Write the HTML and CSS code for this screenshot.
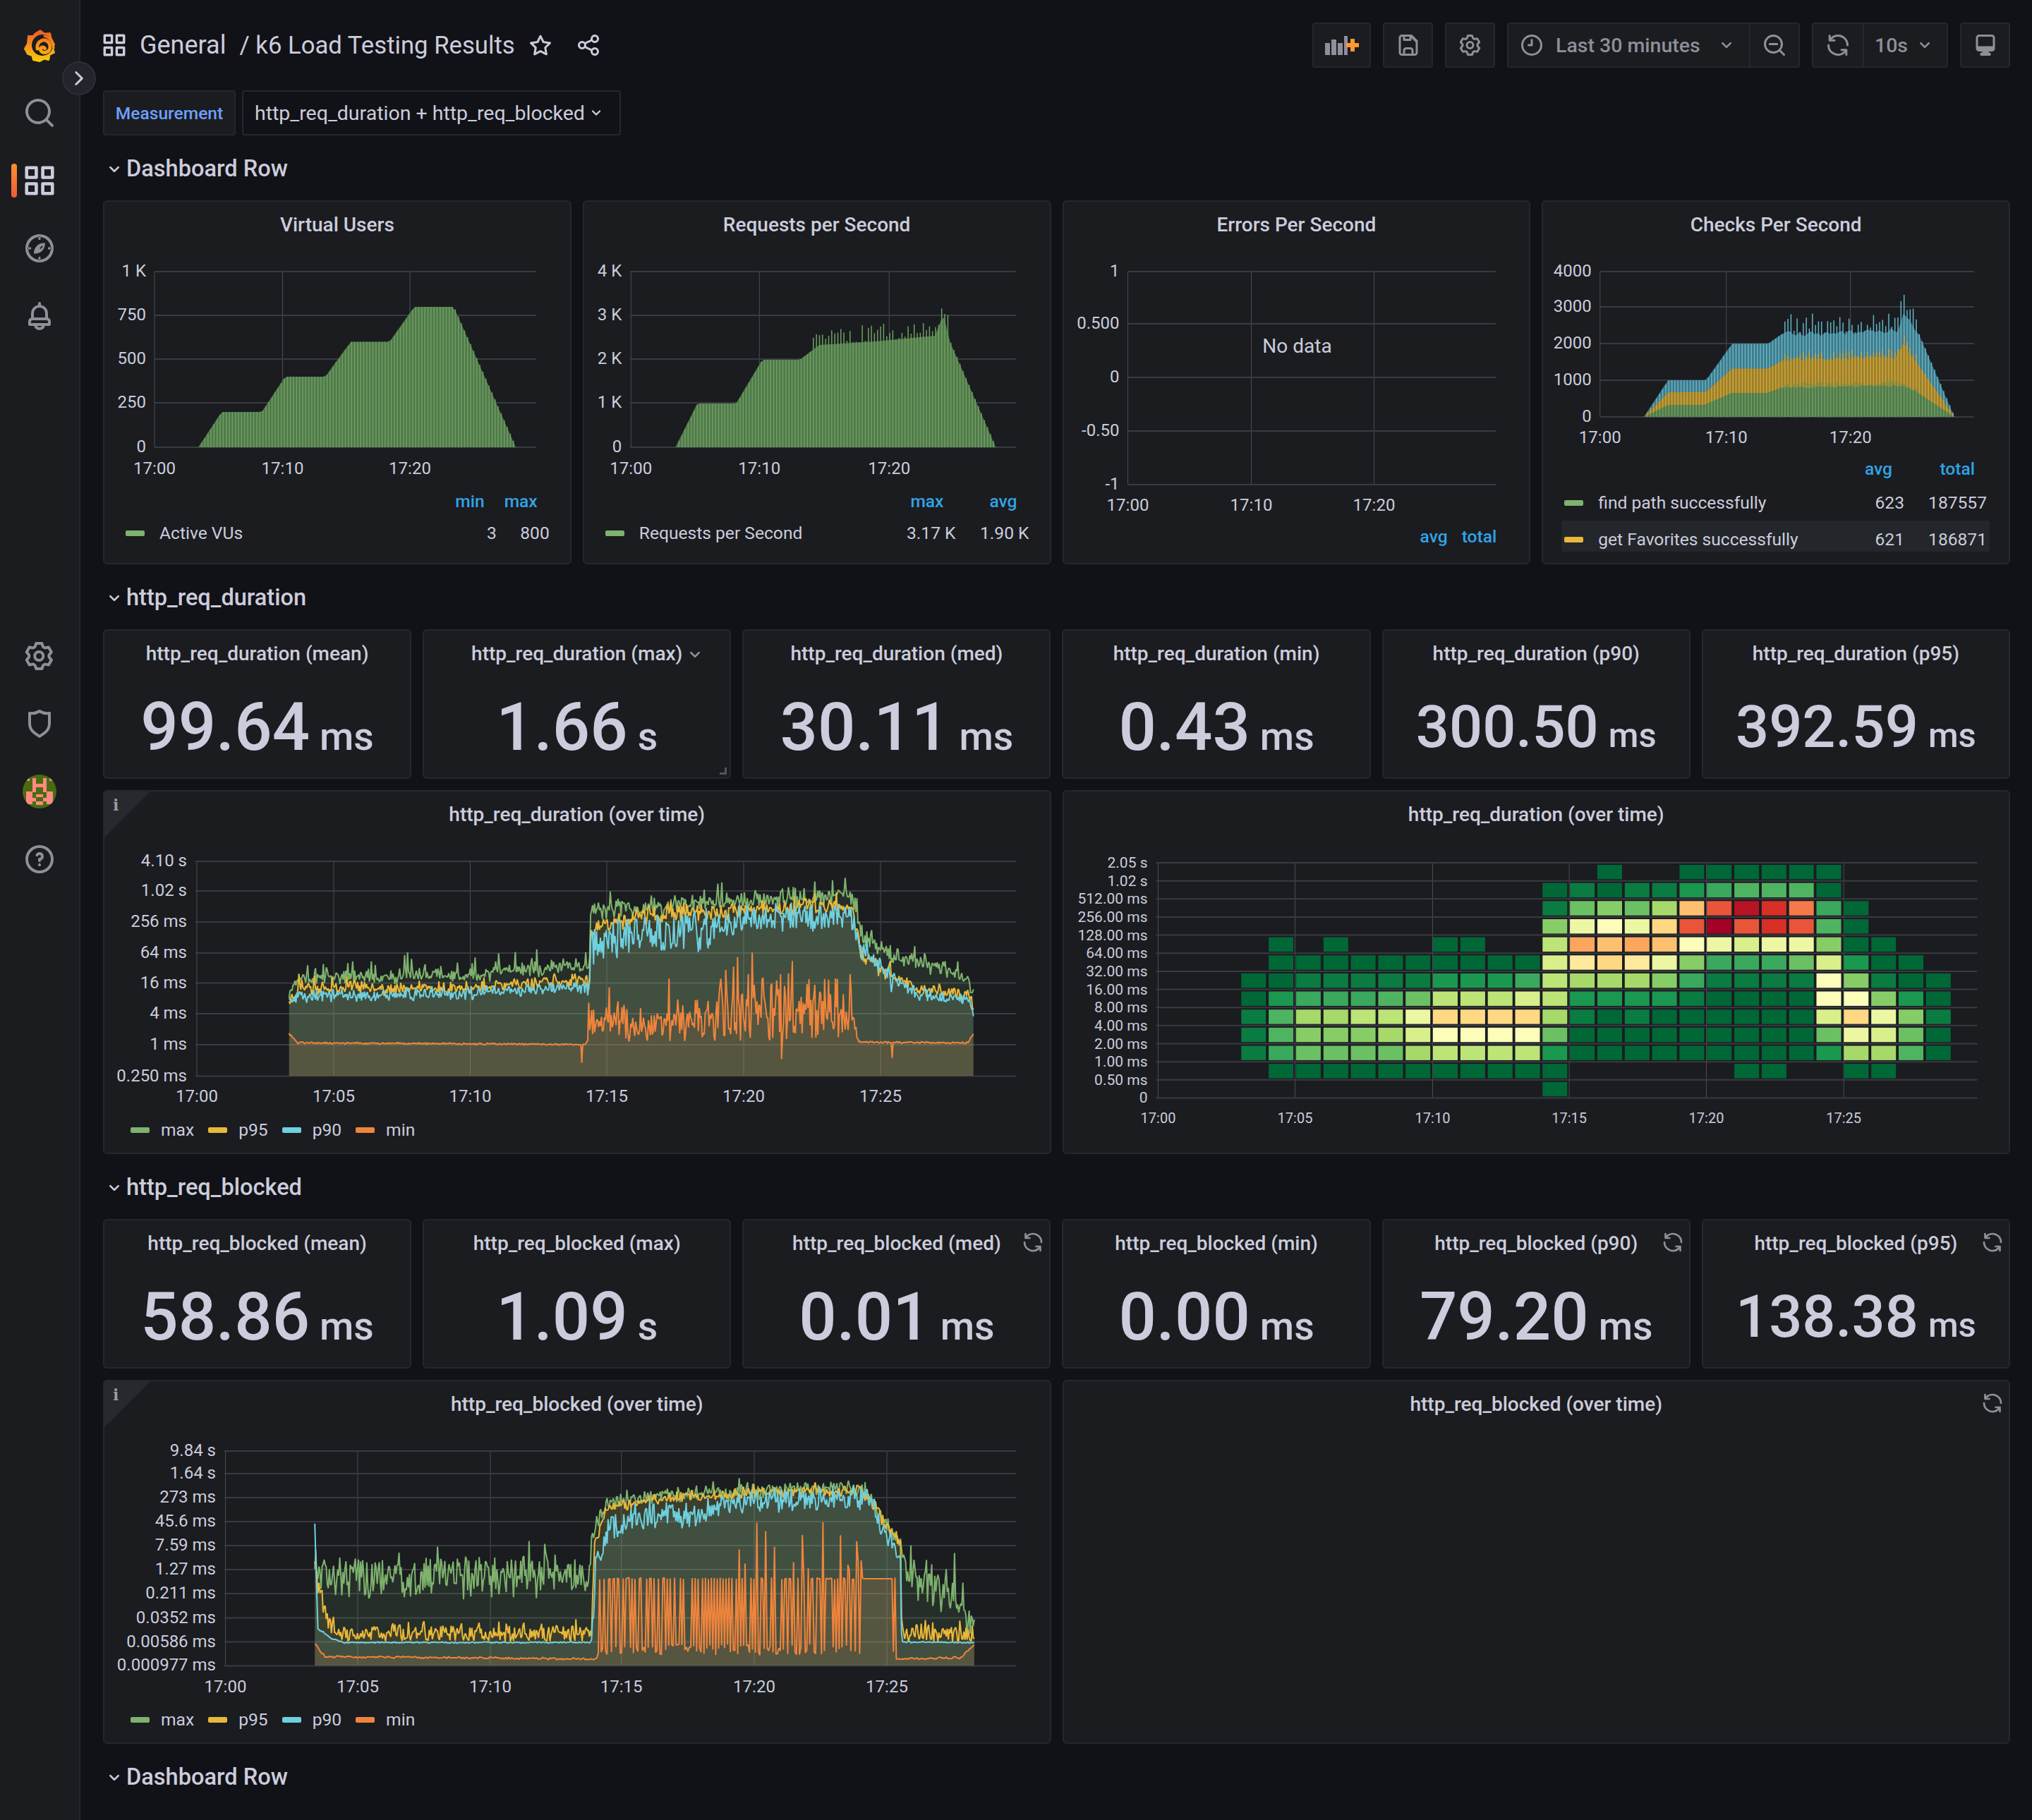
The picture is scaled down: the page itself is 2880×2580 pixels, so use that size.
FILE: index.html
```html
<!DOCTYPE html>
<html lang="en">
<head>
<meta charset="utf-8">
<title>k6 Load Testing Results</title>
<link rel="stylesheet" href="styles.css">
</head>
<body>
<svg class="sprite" aria-hidden="true">
  <symbol id="i-apps" viewBox="1.5 1.5 21 21"><path d="M4 3h6a1 1 0 0 1 1 1v6a1 1 0 0 1-1 1H4a1 1 0 0 1-1-1V4a1 1 0 0 1 1-1Zm1 2v4h4V5ZM14 3h6a1 1 0 0 1 1 1v6a1 1 0 0 1-1 1h-6a1 1 0 0 1-1-1V4a1 1 0 0 1 1-1Zm1 2v4h4V5ZM4 13h6a1 1 0 0 1 1 1v6a1 1 0 0 1-1 1H4a1 1 0 0 1-1-1v-6a1 1 0 0 1 1-1Zm1 2v4h4v-4ZM14 13h6a1 1 0 0 1 1 1v6a1 1 0 0 1-1 1h-6a1 1 0 0 1-1-1v-6a1 1 0 0 1 1-1Zm1 2v4h4v-4Z"/></symbol>
  <symbol id="i-search" viewBox="0 0 24 24"><path d="M21.71,20.29,18,16.61A9,9,0,1,0,16.61,18l3.68,3.68a1,1,0,0,0,1.42,0A1,1,0,0,0,21.71,20.29ZM11,18a7,7,0,1,1,7-7A7,7,0,0,1,11,18Z"/></symbol>
  <symbol id="i-minus" viewBox="0 0 24 24"><path d="M21.71,20.29,18,16.61A9,9,0,1,0,16.61,18l3.68,3.68a1,1,0,0,0,1.42,0A1,1,0,0,0,21.71,20.29ZM11,18a7,7,0,1,1,7-7A7,7,0,0,1,11,18ZM7.5,10h7a1,1,0,0,1,0,2h-7a1,1,0,0,1,0-2Z"/></symbol>
  <symbol id="i-compass" viewBox="0 0 24 24"><path d="M12,2A10,10,0,1,0,22,12,10,10,0,0,0,12,2Zm0,18a8,8,0,1,1,8-8A8,8,0,0,1,12,20ZM11.3,3.6h1.4V6H11.3Zm0,14.4h1.4v2.4H11.3ZM3.6,11.3H6v1.4H3.6Zm14.4,0h2.4v1.4H18ZM15.9,8.1c.3,3.4-1.9,6.6-5.1,7.4l-2.7.4c-.3-3.4,1.9-6.6,5.1-7.4Zm-2,2-1.8,1.8.6.6,1.8-1.8Z"/></symbol>
  <symbol id="i-bell" viewBox="0 0 24 24"><path d="M18,13.18V10a6,6,0,0,0-5-5.91V3a1,1,0,0,0-2,0V4.09A6,6,0,0,0,6,10v3.18A3,3,0,0,0,4,16v2a1,1,0,0,0,1,1H8.14a4,4,0,0,0,7.72,0H19a1,1,0,0,0,1-1V16A3,3,0,0,0,18,13.18ZM8,10a4,4,0,0,1,8,0v3H8Zm4,10a2,2,0,0,1-1.72-1h3.44A2,2,0,0,1,12,20Zm6-3H6V16a1,1,0,0,1,1-1H17a1,1,0,0,1,1,1Z"/></symbol>
  <symbol id="i-gear" viewBox="0 0 24 24"><path d="M19.9,12.66a1,1,0,0,1,0-1.32L21.18,9.9a1,1,0,0,0,.12-1.17l-2-3.46a1,1,0,0,0-1.07-.48l-1.88.38a1,1,0,0,1-1.15-.66l-.61-1.83A1,1,0,0,0,13.64,2h-4a1,1,0,0,0-1,.68L8.08,4.51a1,1,0,0,1-1.15.66L5,4.79A1,1,0,0,0,4,5.27L2,8.73A1,1,0,0,0,2.1,9.9l1.27,1.44a1,1,0,0,1,0,1.32L2.1,14.1A1,1,0,0,0,2,15.27l2,3.46a1,1,0,0,0,1.07.48l1.88-.38a1,1,0,0,1,1.15.66l.61,1.83a1,1,0,0,0,1,.68h4a1,1,0,0,0,.95-.68l.61-1.83a1,1,0,0,1,1.15-.66l1.88.38a1,1,0,0,0,1.07-.48l2-3.46a1,1,0,0,0-.12-1.17ZM18.41,14l.8.9-1.28,2.22-1.18-.24a3,3,0,0,0-3.45,2L12.92,20H10.36L10,18.86a3,3,0,0,0-3.45-2l-1.18.24L4.07,14.89l.8-.9a3,3,0,0,0,0-4l-.8-.9L5.35,6.89l1.18.24a3,3,0,0,0,3.45-2L10.36,4h2.56l.38,1.14a3,3,0,0,0,3.45,2l1.18-.24,1.28,2.22-.8.9A3,3,0,0,0,18.41,14ZM11.64,8a4,4,0,1,0,4,4A4,4,0,0,0,11.64,8Zm0,6a2,2,0,1,1,2-2A2,2,0,0,1,11.64,14Z"/></symbol>
  <symbol id="i-shield" viewBox="0 0 24 24"><path d="M19.63,3.65a1,1,0,0,0-.84-.2,8,8,0,0,1-6.22-1.27,1,1,0,0,0-1.14,0A8,8,0,0,1,5.21,3.45a1,1,0,0,0-.84.2A1,1,0,0,0,4,4.43v7.45a9,9,0,0,0,3.77,7.33l3.65,2.6a1,1,0,0,0,1.16,0l3.65-2.6A9,9,0,0,0,20,11.88V4.43A1,1,0,0,0,19.63,3.65ZM18,11.88a7,7,0,0,1-2.93,5.7L12,19.77,8.93,17.58A7,7,0,0,1,6,11.88V5.58a10,10,0,0,0,6-1.39,10,10,0,0,0,6,1.39Z"/></symbol>
  <symbol id="i-help" viewBox="0 0 24 24"><path d="M11.29,15.29a1.58,1.58,0,0,0-.12.15.76.76,0,0,0-.09.18.64.64,0,0,0-.06.18,1.36,1.36,0,0,0,0,.2.84.84,0,0,0,.08.38.9.9,0,0,0,.54.54.94.94,0,0,0,.76,0,.9.9,0,0,0,.54-.54A1,1,0,0,0,13,16a1,1,0,0,0-.29-.71A1,1,0,0,0,11.29,15.29ZM12,2A10,10,0,1,0,22,12,10,10,0,0,0,12,2Zm0,18a8,8,0,1,1,8-8A8,8,0,0,1,12,20ZM12,7A3,3,0,0,0,9.4,8.5a1,1,0,1,0,1.73,1A1,1,0,0,1,12,9a1,1,0,0,1,0,2,1,1,0,0,0-1,1v1a1,1,0,0,0,2,0v-.18A3,3,0,0,0,12,7Z"/></symbol>
  <symbol id="i-star" viewBox="0 0 24 24"><path d="M22,9.67A1,1,0,0,0,21.14,9l-5.69-.83L12.9,3a1,1,0,0,0-1.8,0L8.55,8.16,2.86,9a1,1,0,0,0-.81.68,1,1,0,0,0,.25,1l4.13,4-1,5.68A1,1,0,0,0,6.9,21.44L12,18.77l5.1,2.67a.93.93,0,0,0,.46.12,1,1,0,0,0,.59-.19,1,1,0,0,0,.4-1l-1-5.68,4.13-4A1,1,0,0,0,22,9.67Zm-6.15,4a1,1,0,0,0-.29.88l.72,4.2-3.76-2a1.06,1.06,0,0,0-.94,0l-3.76,2,.72-4.2a1,1,0,0,0-.29-.88l-3-3,4.21-.61a1,1,0,0,0,.76-.55L12,5.7l1.88,3.82a1,1,0,0,0,.76.55l4.21.61Z"/></symbol>
  <symbol id="i-share" viewBox="0 0 24 24"><path d="M18,14a4,4,0,0,0-3.08,1.48l-5.1-2.35a3.64,3.64,0,0,0,0-2.26l5.1-2.35A4,4,0,1,0,14,6a4.17,4.17,0,0,0,.07.71L8.79,9.14a4,4,0,1,0,0,5.72l5.28,2.43A4.17,4.17,0,0,0,14,18a4,4,0,1,0,4-4ZM18,4a2,2,0,1,1-2,2A2,2,0,0,1,18,4ZM6,14a2,2,0,1,1,2-2A2,2,0,0,1,6,14Zm12,6a2,2,0,1,1,2-2A2,2,0,0,1,18,20Z"/></symbol>
  <symbol id="i-sync" viewBox="0 0 24 24"><path d="M19.91,15.51H15.38a1,1,0,0,0,0,2h2.4A8,8,0,0,1,4,12a1,1,0,0,0-2,0,10,10,0,0,0,16.88,7.23V21a1,1,0,0,0,2,0V16.5A1,1,0,0,0,19.91,15.51ZM12,2A10,10,0,0,0,5.12,4.77V3a1,1,0,0,0-2,0V7.5a1,1,0,0,0,1,1h4.5a1,1,0,0,0,0-2H6.22A8,8,0,0,1,20,12a1,1,0,0,0,2,0A10,10,0,0,0,12,2Z"/></symbol>
  <symbol id="i-clock" viewBox="0 0 24 24"><path d="M12,2A10,10,0,1,0,22,12,10,10,0,0,0,12,2Zm0,18a8,8,0,1,1,8-8A8,8,0,0,1,12,20Zm1-13a1,1,0,0,0-2,0v4H9a1,1,0,0,0,0,2h3a1,1,0,0,0,1-1Z"/></symbol>
  <symbol id="i-save" viewBox="0 0 24 24"><path d="M20.7,7.3l-5-5A1,1,0,0,0,15,2H6A3,3,0,0,0,3,5V19a3,3,0,0,0,3,3H18a3,3,0,0,0,3-3V8A1,1,0,0,0,20.7,7.3ZM9,4h4V6H9ZM15,20H9V17a1,1,0,0,1,1-1h4a1,1,0,0,1,1,1Zm4-1a1,1,0,0,1-1,1H17V17a3,3,0,0,0-3-3H10a3,3,0,0,0-3,3v3H6a1,1,0,0,1-1-1V5A1,1,0,0,1,6,4H7V7A1,1,0,0,0,8,8h6a1,1,0,0,0,1-1V5.4l4,4Z"/></symbol>
  <symbol id="i-tv" viewBox="0 0 24 24"><path d="M6,2H18a3,3,0,0,1,3,3V15a3,3,0,0,1-3,3H15v1h1a1,1,0,0,1,1,1v1a1,1,0,0,1-1,1H8a1,1,0,0,1-1-1V20a1,1,0,0,1,1-1H9V18H6a3,3,0,0,1-3-3V5A3,3,0,0,1,6,2ZM5,13H19V5a1,1,0,0,0-1-1H6A1,1,0,0,0,5,5Z"/></symbol>
  <symbol id="i-down" viewBox="0 0 24 24"><path d="M17,9.17a1,1,0,0,0-1.41,0L12,12.71,8.46,9.17a1,1,0,0,0-1.41,0,1,1,0,0,0,0,1.42l4.24,4.24a1,1,0,0,0,1.42,0L17,10.59A1,1,0,0,0,17,9.17Z"/></symbol>
  <symbol id="i-right" viewBox="0 0 24 24"><path d="M15.54,11.29,9.88,5.64a1,1,0,0,0-1.42,0,1,1,0,0,0,0,1.41l4.95,5L8.46,17a1,1,0,0,0,0,1.41,1,1,0,0,0,.71.3,1,1,0,0,0,.71-.3l5.66-5.65A1,1,0,0,0,15.54,11.29Z"/></symbol>
</svg>

<div class="app">
  <nav class="sidemenu">
    <button class="menu-toggle"><svg class="ic ic-toggle"><use href="#i-right"/></svg></button>
    <div class="menu-item">
      <svg class="logo" viewBox="0 0 44 47">
        <defs>
          <linearGradient id="logoGrad" x1="0" y1="0" x2="0" y2="1"><stop offset="0" stop-color="#f05a28"/><stop offset="1" stop-color="#fbca0a"/></linearGradient>
          <linearGradient id="logoArm" gradientUnits="userSpaceOnUse" x1="0" y1="0" x2="0" y2="47"><stop offset="0" stop-color="#f05a28"/><stop offset="1" stop-color="#fbca0a"/></linearGradient>
        </defs>
        <path class="logo-body" d="M23 2 29 6.500 37 6 38.500 13 43 22 41 27 43 33.500 36.500 36.500 35 44 28.500 42.500 22 46 13 44 11.500 38 5 35.500 1 28 5 21 6 10 12.500 10 17 5.500Z"/>
        <circle class="logo-hole" cx="26" cy="23" r="15"/>
        <path class="logo-arm" d="M29.500 27.500C28 25 24 25.500 23.500 28.500 23 32 27.500 34.500 31.500 33 36 31.500 38 27 36.500 22 35 17 29.500 14.500 25 16.500 20.500 18.500 18 23 19 28"/>
        <path class="logo-arm logo-arm-out" d="M42 27C41 19 37 12 29 10"/>
      </svg>
    </div>
    <div class="menu-item"><svg class="ic ic-menu"><use href="#i-search"/></svg></div>
    <div class="menu-item is-active"><svg class="ic ic-menu ic-bright"><use href="#i-apps"/></svg></div>
    <div class="menu-item"><svg class="ic ic-menu"><use href="#i-compass"/></svg></div>
    <div class="menu-item"><svg class="ic ic-menu"><use href="#i-bell"/></svg></div>
    <div class="menu-spacer"></div>
    <div class="menu-item"><svg class="ic ic-menu"><use href="#i-gear"/></svg></div>
    <div class="menu-item"><svg class="ic ic-menu"><use href="#i-shield"/></svg></div>
    <div class="menu-item">
      <svg class="avatar" viewBox="0 0 48 48">
        <defs><clipPath id="avClip"><circle cx="24" cy="24" r="24"/></clipPath></defs>
        <g clip-path="url(#avClip)">
          <rect class="av-bg" width="48" height="48"/>
          <path class="av-fg" d="M14 5h5v8h10V5h5v20H29V18H19v7H14ZM5 5h5v4H5ZM38 5h5v4h-5ZM5 24h9v18H5ZM34 24h9v18H34ZM19 28h10v4H19ZM14 33h5v5H14ZM29 33h5v5H29ZM19 38h10v5H19Z"/>
        </g>
      </svg>
    </div>
    <div class="menu-item"><svg class="ic ic-menu"><use href="#i-help"/></svg></div>
  </nav>

  <main class="main">
    <header class="navbar">
      <svg class="ic ic-head ic-bright"><use href="#i-apps"/></svg>
      <h1 class="crumbs"><span>General</span><span class="crumb-sep">/ k6 Load Testing Results</span></h1>
      <svg class="ic ic-nav ic-bright"><use href="#i-star"/></svg>
      <svg class="ic ic-nav ic-bright"><use href="#i-share"/></svg>
      <div class="toolbar">
        <div class="tbtn tbtn-add">
          <svg class="add-ic" viewBox="0 0 48 27">
            <path class="add-bars" d="M0 10h7v17H0ZM9 5h7v22H9ZM18 10h7v17h-7ZM27 0h5v27h-5Z"/>
            <path class="add-plus" d="M36 4h6v6h6v6h-6v6h-6v-6h-6v-6h6Z"/>
          </svg>
        </div>
        <div class="tbtn tbtn-sq"><svg class="ic ic-tool"><use href="#i-save"/></svg></div>
        <div class="tbtn tbtn-sq"><svg class="ic ic-tool"><use href="#i-gear"/></svg></div>
        <div class="tgroup">
          <div class="tpart tpart-range"><svg class="ic ic-tool"><use href="#i-clock"/></svg><span class="ttext">Last 30 minutes</span><svg class="ic ic-chev"><use href="#i-down"/></svg></div>
          <div class="tpart tpart-sq"><svg class="ic ic-tool"><use href="#i-minus"/></svg></div>
        </div>
        <div class="tgroup">
          <div class="tpart tpart-sq"><svg class="ic ic-tool"><use href="#i-sync"/></svg></div>
          <div class="tpart tpart-int"><span class="ttext">10s</span><svg class="ic ic-chev"><use href="#i-down"/></svg></div>
        </div>
        <div class="tbtn tbtn-sq"><svg class="ic ic-tool"><use href="#i-tv"/></svg></div>
      </div>
    </header>

    <div class="vars">
      <label class="var-label">Measurement</label>
      <div class="var-value">http_req_duration + http_req_blocked<svg class="ic ic-chev ic-chev-sm"><use href="#i-down"/></svg></div>
    </div>

    <div class="row-head"><svg class="ic ic-row"><use href="#i-down"/></svg>Dashboard Row</div>
    <section class="grid grid-4 h-graph">
      <article class="panel">
        <h2 class="panel-title">Virtual Users</h2>
        <svg class="chart" data-chart="vu"></svg>
        <table class="legend">
          <tr><th></th><th class="w75">min</th><th class="w75">max</th></tr>
          <tr><td class="name"><i class="sw sw-green"></i>Active VUs</td><td>3</td><td>800</td></tr>
        </table>
      </article>
      <article class="panel">
        <h2 class="panel-title">Requests per Second</h2>
        <svg class="chart" data-chart="rps"></svg>
        <table class="legend">
          <tr><th></th><th class="w104">max</th><th class="w104">avg</th></tr>
          <tr><td class="name"><i class="sw sw-green"></i>Requests per Second</td><td>3.17 K</td><td>1.90 K</td></tr>
        </table>
      </article>
      <article class="panel">
        <h2 class="panel-title">Errors Per Second</h2>
        <svg class="chart" data-chart="err"></svg>
        <div class="legend-head-only"><span>avg</span><span>total</span></div>
      </article>
      <article class="panel">
        <h2 class="panel-title">Checks Per Second</h2>
        <svg class="chart" data-chart="checks"></svg>
        <table class="legend legend-tall">
          <tr><th></th><th class="w117">avg</th><th class="w117">total</th></tr>
          <tr><td class="name"><i class="sw sw-green"></i>find path successfully</td><td>623</td><td>187557</td></tr>
          <tr class="hl"><td class="name"><i class="sw sw-yellow"></i>get Favorites successfully</td><td>621</td><td>186871</td></tr>
        </table>
      </article>
    </section>

    <div class="row-head"><svg class="ic ic-row"><use href="#i-down"/></svg>http_req_duration</div>
    <section class="grid grid-6 h-stat">
      <article class="panel"><h2 class="panel-title">http_req_duration (mean)</h2><div class="stat"><span class="num">99.64</span><span class="unit">ms</span></div></article>
      <article class="panel"><h2 class="panel-title">http_req_duration (max)<svg class="ic ic-chev ic-chev-title"><use href="#i-down"/></svg></h2><div class="stat"><span class="num">1.66</span><span class="unit">s</span></div><span class="resize"></span></article>
      <article class="panel"><h2 class="panel-title">http_req_duration (med)</h2><div class="stat"><span class="num">30.11</span><span class="unit">ms</span></div></article>
      <article class="panel"><h2 class="panel-title">http_req_duration (min)</h2><div class="stat"><span class="num">0.43</span><span class="unit">ms</span></div></article>
      <article class="panel"><h2 class="panel-title">http_req_duration (p90)</h2><div class="stat stat-sm"><span class="num">300.50</span><span class="unit">ms</span></div></article>
      <article class="panel"><h2 class="panel-title">http_req_duration (p95)</h2><div class="stat stat-sm"><span class="num">392.59</span><span class="unit">ms</span></div></article>
    </section>
    <section class="grid grid-2 h-graph gap-top">
      <article class="panel">
        <span class="info-corner"><em>i</em></span>
        <h2 class="panel-title">http_req_duration (over time)</h2>
        <svg class="chart" data-chart="duration"></svg>
        <ul class="legend-line">
          <li><i class="sw sw-green"></i>max</li><li><i class="sw sw-yellow"></i>p95</li><li><i class="sw sw-blue"></i>p90</li><li><i class="sw sw-orange"></i>min</li>
        </ul>
      </article>
      <article class="panel">
        <h2 class="panel-title">http_req_duration (over time)</h2>
        <svg class="chart" data-chart="heat"></svg>
      </article>
    </section>

    <div class="row-head"><svg class="ic ic-row"><use href="#i-down"/></svg>http_req_blocked</div>
    <section class="grid grid-6 h-stat">
      <article class="panel"><h2 class="panel-title">http_req_blocked (mean)</h2><div class="stat"><span class="num">58.86</span><span class="unit">ms</span></div></article>
      <article class="panel"><h2 class="panel-title">http_req_blocked (max)</h2><div class="stat"><span class="num">1.09</span><span class="unit">s</span></div></article>
      <article class="panel"><svg class="ic ic-refresh"><use href="#i-sync"/></svg><h2 class="panel-title">http_req_blocked (med)</h2><div class="stat"><span class="num">0.01</span><span class="unit">ms</span></div></article>
      <article class="panel"><h2 class="panel-title">http_req_blocked (min)</h2><div class="stat"><span class="num">0.00</span><span class="unit">ms</span></div></article>
      <article class="panel"><svg class="ic ic-refresh"><use href="#i-sync"/></svg><h2 class="panel-title">http_req_blocked (p90)</h2><div class="stat"><span class="num">79.20</span><span class="unit">ms</span></div></article>
      <article class="panel"><svg class="ic ic-refresh"><use href="#i-sync"/></svg><h2 class="panel-title">http_req_blocked (p95)</h2><div class="stat stat-sm"><span class="num">138.38</span><span class="unit">ms</span></div></article>
    </section>
    <section class="grid grid-2 h-graph gap-top">
      <article class="panel">
        <span class="info-corner"><em>i</em></span>
        <h2 class="panel-title">http_req_blocked (over time)</h2>
        <svg class="chart" data-chart="blocked"></svg>
        <ul class="legend-line">
          <li><i class="sw sw-green"></i>max</li><li><i class="sw sw-yellow"></i>p95</li><li><i class="sw sw-blue"></i>p90</li><li><i class="sw sw-orange"></i>min</li>
        </ul>
      </article>
      <article class="panel">
        <svg class="ic ic-refresh"><use href="#i-sync"/></svg>
        <h2 class="panel-title">http_req_blocked (over time)</h2>
      </article>
    </section>

    <div class="row-head"><svg class="ic ic-row"><use href="#i-down"/></svg>Dashboard Row</div>
  </main>
</div>
<script src="charts.js"></script>
</body>
</html>
```
FILE: styles.css
```css
* { box-sizing: border-box; }
html, body { margin: 0; height: 100%; background: #111217; }
body { font-family: Roboto, "Liberation Sans", sans-serif; color: #ccccdc; overflow: hidden; }
.sprite { position: absolute; width: 0; height: 0; }
.app { display: flex; height: 2580px; }
.ic { fill: currentColor; display: block; flex: none; }
.ic-bright { color: #ccccdc; }

/* side menu */
.sidemenu { position: relative; width: 114px; flex: none; background: #1a1c20; border-right: 2px solid #25272c; padding-top: 16px; display: flex; flex-direction: column; color: #8e8f98; }
.menu-item { position: relative; height: 96px; display: flex; align-items: center; justify-content: center; }
.menu-item.is-active::before { content: ""; position: absolute; left: 16px; top: 24px; width: 8px; height: 48px; border-radius: 4px; background: linear-gradient(#ff9030, #f05a38); }
.menu-item.is-active .ic-menu { color: #ccccdc; }
.menu-spacer { height: 386px; }
.ic-menu { width: 48px; height: 48px; }
.logo { width: 44px; height: 47px; }
.logo-body { fill: url(#logoGrad); stroke: url(#logoGrad); stroke-width: 2; stroke-linejoin: round; }
.logo-hole { fill: #1a1c20; }
.logo-arm { fill: none; stroke: url(#logoArm); stroke-width: 5; stroke-linecap: round; }
.logo-arm-out { stroke-width: 3; }
.avatar { width: 48px; height: 48px; }
.av-bg { fill: #4a6a10; }
.av-fg { fill: #ff8a80; }
.menu-toggle { position: absolute; z-index: 2; left: 88px; top: 87px; width: 48px; height: 48px; padding: 0; border-radius: 50%; border: 2px solid #2c2f35; background: #22252b; color: #ccccdc; display: flex; align-items: center; justify-content: center; }
.ic-toggle { width: 36px; height: 36px; }

/* main */
.main { flex: 1; min-width: 0; padding: 32px 31px 0 30px; }
.navbar { height: 64px; display: flex; align-items: center; }
.ic-head { width: 36px; height: 36px; margin: 0 18px 0 0; }
.crumbs { margin: 0; font-size: 36px; font-weight: 400; white-space: nowrap; display: flex; width: 550px; }
.crumb-sep { margin-left: 19px; font-size: 34.7px; line-height: 42px; }
.ic-nav { width: 36px; height: 36px; margin-right: 32px; }
.toolbar { margin-left: auto; display: flex; gap: 17px; color: #8e8f98; }
.tbtn, .tgroup { height: 64px; background: #1a1c20; border: 2px solid #25272c; border-radius: 4px; display: flex; align-items: center; justify-content: center; }
.tbtn-add { width: 83px; }
.add-ic { width: 48px; height: 27px; }
.add-bars { fill: #8e8f98; }
.add-plus { fill: #ff9830; }
.tbtn-sq { width: 71px; }
.ic-tool { width: 36px; height: 36px; }
.tgroup { justify-content: flex-start; }
.tpart { height: 100%; display: flex; align-items: center; justify-content: center; }
.tpart + .tpart { border-left: 2px solid #25272c; }
.tpart-sq { width: 70px; }
.tpart-range { width: 341px; padding-left: 15px; justify-content: flex-start; }
.tpart-int { width: 119px; }
.ttext { font-size: 28.5px; font-weight: 500; }
.tpart-range .ttext { margin-left: 16px; width: 226px; }
.ic-chev { width: 32px; height: 32px; }
.tpart-int .ic-chev { margin-left: 8px; }

/* variables */
.vars { display: flex; gap: 9px; margin-top: 32px; height: 64px; padding-left: 2px; }
.var-label { width: 188px; background: #1a1c20; border: 2px solid #25272c; border-radius: 4px; display: flex; align-items: center; justify-content: center; font-size: 24.6px; font-weight: 500; color: #6e9fff; }
.var-value { width: 537px; background: #111217; border: 2px solid #25272c; border-radius: 4px; display: flex; align-items: center; font-size: 28.5px; padding-left: 16px; }
.ic-chev-sm { margin-left: 2px; width: 28px; height: 28px; }

/* rows */
.row-head { height: 92px; padding-top: 2px; display: flex; align-items: center; font-size: 32.6px; font-weight: 500; margin-left: 2px; }
.ic-row { width: 32px; height: 32px; margin: 2px 1px 0 0; }

/* grids + panels */
.grid { display: grid; gap: 16px; margin-left: 2px; grid-template-rows: minmax(0, 1fr); }
.grid-2 { grid-template-columns: repeat(2, 1fr); }
.grid-4 { grid-template-columns: repeat(4, 1fr); }
.grid-6 { grid-template-columns: repeat(6, 1fr); }
.h-graph { height: 516px; }
.h-stat { height: 212px; }
.gap-top { margin-top: 16px; }
.panel { position: relative; background: #1a1c20; border: 2px solid #25272c; border-radius: 6px; display: flex; flex-direction: column; min-width: 0; }
.panel-title { margin: 0; height: 64px; flex: none; display: flex; align-items: center; justify-content: center; font-size: 28px; font-weight: 500; color: #ccccdc; white-space: nowrap; }
.chart { flex: 1 1 0; min-height: 0; width: 100%; display: block; }
.ic-chev-title { color: #8e8f98; margin: 4px -34px 0 2px; }
.resize { position: absolute; right: 4px; bottom: 4px; width: 10px; height: 10px; border-right: 3px solid #55565c; border-bottom: 3px solid #55565c; }
.ic-refresh { position: absolute; z-index: 1; right: 7px; top: 15px; width: 32px; height: 32px; color: #8e8f98; }
.info-corner { position: absolute; left: 0; top: 0; width: 65px; height: 65px; background: #26292e; clip-path: polygon(0 0, 100% 0, 0 100%); border-top-left-radius: 4px; }
.info-corner em { position: absolute; left: 12px; top: 6px; font: bold 22px/1.2 "DejaVu Serif", serif; color: #9a9ba3; }

/* stat */
.stat { display: flex; justify-content: center; align-items: baseline; padding-top: 11px; font-weight: 500; font-size: 94px; line-height: 124px; color: #ccccdc; white-space: nowrap; }
.stat-sm { font-size: 83px; }
.unit { font-size: .59em; line-height: 60px; margin-left: 14px; }

/* legends */
.legend { border-collapse: collapse; margin: 0 25px 21px 26px; width: calc(100% - 51px); flex: none; font-size: 24.6px; }
.legend th { height: 44px; padding: 0 21px 2px 0; text-align: right; font-weight: 500; color: #33a2e5; }
.legend td { height: 44px; padding: 0 4px 0 0; text-align: right; white-space: nowrap; }
.legend td.name { text-align: left; padding-left: 4px; }
.w75 { width: 75px; }
.w104 { width: 104px; }
.w117 { width: 117px; }
.legend-tall { margin-right: 27px; width: calc(100% - 53px); margin-bottom: 8px; }
.legend-tall th { height: 42px; }
.legend-tall td { height: 52px; }
.legend-tall .hl td { background: linear-gradient(#23262b 44px, transparent 44px); }
.sw { display: inline-block; width: 27px; height: 8px; border-radius: 2px; margin-right: 21px; vertical-align: middle; position: relative; top: -1px; }
.sw-green { background: #7eb26d; }
.sw-yellow { background: #eab839; }
.sw-blue { background: #6ed0e0; }
.sw-orange { background: #ef843c; }
.legend-head-only { display: flex; justify-content: flex-end; gap: 20px; margin: 0 46px 18px 0; height: 40px; align-items: center; font-size: 24.6px; font-weight: 500; color: #33a2e5; }
.legend-line { list-style: none; margin: 0 0 15px 37px; padding: 0; display: flex; gap: 20px; height: 36px; align-items: center; font-size: 24.6px; flex: none; }
.legend-line .sw { margin-right: 16px; }

/* chart text */
.gx { stroke: #4b4c52; stroke-width: 1; }
.gy { stroke: #3a3b41; stroke-width: 2; }
.ax { fill: #ccccdc; font-size: 24px; font-family: Roboto, sans-serif; }
.ax-y { text-anchor: end; }
.ax-x { text-anchor: middle; }
.ax-hy { font-size: 21px; }
.ax-hx { font-size: 20px; }
.nodata { fill: #ccccdc; font-size: 28px; text-anchor: middle; font-family: Roboto, sans-serif; }
.ln { fill: none; stroke-width: 2; stroke-linejoin: bevel; }
.ar { stroke: none; fill-opacity: .12; }
```
FILE: charts.js
```js
(function () {
  var seed = 90421;
  function R() { seed = (seed * 16807) % 2147483647; return seed / 2147483647; }
  var C = { g: '#7eb26d', y: '#eab839', b: '#6ed0e0', o: '#ef843c' };

  function lerp(pts, x) {
    if (x <= pts[0][0]) return pts[0][1];
    for (var i = 1; i < pts.length; i++) {
      if (x <= pts[i][0]) {
        var a = pts[i - 1], b = pts[i];
        return a[1] + (b[1] - a[1]) * (x - a[0]) / ((b[0] - a[0]) || 1);
      }
    }
    return pts[pts.length - 1][1];
  }

  function grid(o) {
    var s = '';
    o.vx.forEach(function (v) {
      s += '<line class="gx" x1="' + v[0] + '" x2="' + v[0] + '" y1="' + o.top + '" y2="' + o.bottom + '"/>';
    });
    o.hy.forEach(function (h) {
      s += '<line class="gy" x1="' + o.left + '" x2="' + o.right + '" y1="' + h[0] + '" y2="' + h[0] + '"/>';
      s += '<text class="ax ax-y ' + (o.yc || '') + '" x="' + (o.left - 12) + '" y="' + (h[0] + 7) + '">' + h[1] + '</text>';
    });
    o.vx.forEach(function (v) {
      if (v[1]) s += '<text class="ax ax-x ' + (o.xc || '') + '" x="' + v[0] + '" y="' + (o.ty + 0.5) + '">' + v[1] + '</text>';
    });
    return s;
  }

  // filled area + closely spaced vertical bars; "top" gives each bar's peak, "low" the body of the area
  function barArea(top, low, x0, x1, base, under, bar) {
    var d = 'M' + x0 + ' ' + base, x, s = '';
    for (x = x0; x <= x1; x += 4.33) d += 'L' + x.toFixed(1) + ' ' + low(x).toFixed(1);
    d += 'L' + x1 + ' ' + low(x1).toFixed(1) + 'L' + x1 + ' ' + base + 'Z';
    s += '<path d="' + d + '" fill="' + under + '"/>';
    for (x = x0; x <= x1; x += 4.33) {
      var t = Math.min(top(x), base);
      s += '<rect x="' + x.toFixed(1) + '" y="' + t.toFixed(1) + '" width="1.5" height="' + (base - t).toFixed(1) + '" fill="' + bar + '"/>';
    }
    return s;
  }

  function sample(base, segs, x0, x1, step, custom) {
    var out = [];
    for (var x = x0; x <= x1; x += step) {
      var y = lerp(base, x), sg = segs[segs.length - 1];
      for (var i = 0; i < segs.length; i++) { if (x <= segs[i][0]) { sg = segs[i]; break; } }
      y += R() * sg[2] - R() * sg[1];
      if (R() < sg[3]) y -= R() * sg[4];
      if (custom) y = custom(x, y);
      out.push([x, y]);
    }
    return out;
  }

  function drawSeries(list, mx, my, bottom) {
    var areas = '', lines = '';
    list.forEach(function (sr) {
      var d = '';
      sr.data.forEach(function (p, i) { d += (i ? 'L' : 'M') + mx(p[0]).toFixed(1) + ' ' + my(p[1]).toFixed(1); });
      var first = sr.data[0], last = sr.data[sr.data.length - 1];
      areas += '<path class="ar" fill="' + sr.c + '" d="' + d + 'L' + mx(last[0]).toFixed(1) + ' ' + bottom + 'L' + mx(first[0]).toFixed(1) + ' ' + bottom + 'Z"/>';
      lines += '<path class="ln" stroke="' + sr.c + '" d="' + d + '"/>';
    });
    return areas + lines;
  }

  var GU = '#50794a', GB = '#6f9f62';
  var draw = {
    vu: function () {
      var g = grid({ left: 219, right: 760, top: 385, bottom: 634, ty: 671,
        hy: [[385, '1 K'], [447, '750'], [509, '500'], [571, '250'], [634, '0']],
        vx: [[219, '17:00'], [400.5, '17:10'], [581, '17:20']] });
      var pts = [[281, 634], [314, 584], [371, 584], [404, 534], [461, 534], [497, 484.6], [552, 484.6], [587, 435], [643, 435], [731, 634]];
      var f = function (x) { return lerp(pts, x); };
      return g + barArea(f, f, 281, 731, 634, GU, GB);
    },
    rps: function () {
      var g = grid({ left: 893, right: 1440, top: 385, bottom: 634, ty: 671,
        hy: [[385, '4 K'], [447, '3 K'], [509, '2 K'], [571, '1 K'], [634, '0']],
        vx: [[894, '17:00'], [1076, '17:10'], [1260, '17:20']] });
      var pts = [[957, 634], [988, 572], [1043, 572], [1080, 510], [1133, 510], [1161, 489], [1240, 484], [1325, 476], [1337, 445], [1345, 482], [1411, 634]];
      var low = function (x) { return lerp(pts, x); };
      var top = function (x) { return low(x) - ((x > 1150 && x < 1345) ? R() * 24 : 0); };
      return g + barArea(top, low, 957, 1411, 634, GU, GB);
    },
    err: function () {
      var g = grid({ left: 1598, right: 2120, top: 385, bottom: 687, ty: 723,
        hy: [[385, '1'], [459, '0.500'], [535, '0'], [611, '-0.50'], [687, '-1']],
        vx: [[1598, '17:00'], [1773, '17:10'], [1947, '17:20']] });
      return g + '<text class="nodata" x="1838" y="500">No data</text>';
    },
    checks: function () {
      var g = grid({ left: 2268, right: 2798, top: 385, bottom: 591, ty: 627,
        hy: [[385, '4000'], [435, '3000'], [487, '2000'], [539, '1000'], [591, '0']],
        vx: [[2268, '17:00'], [2447, '17:10'], [2623, '17:20']] });
      function mx(z) { return 1500 + z / 1.136; }
      function my(z) { return 270 + z / 2.9; }
      function pair(pts, amp, jit) {
        var p = pts.map(function (q) { return [mx(q[0]), my(q[1])]; });
        var lo = mx(1165), hi = mx(1385);
        var low = function (x) { return lerp(p, x); };
        return {
          low: function (x) { return low(x) + ((x > lo && x < hi) ? R() * jit - jit / 2 : 0); },
          top: function (x) { return low(x) - ((x > lo && x < hi) ? R() * amp : 0); }
        };
      }
      var x0 = mx(943), x1 = mx(1443), b = my(931);
      var blue = pair([[943, 931], [982, 780], [1043, 780], [1085, 630], [1143, 630], [1165, 590], [1280, 585], [1352, 575], [1362, 490], [1372, 545], [1383, 575], [1443, 931]], 30, 8);
      var yel = pair([[943, 931], [982, 830], [1043, 828], [1085, 732], [1143, 732], [1165, 700], [1350, 685], [1362, 625], [1370, 670], [1380, 700], [1443, 931]], 13, 5);
      var grn = pair([[943, 931], [982, 882], [1040, 882], [1085, 832], [1143, 832], [1165, 810], [1360, 802], [1380, 825], [1443, 931]], 7, 3);
      return g + barArea(blue.top, blue.low, x0, x1, b, '#40788a', '#62b5c5') + barArea(yel.top, yel.low, x0, x1, b, '#9a7f2e', '#d2a636') + barArea(grn.top, grn.low, x0, x1, b, GU, GB);
    },
    duration: function () {
      var g = grid({ left: 277, right: 1440, top: 1221, bottom: 1525.5, ty: 1561,
        hy: [[1221, '4.10 s'], [1263, '1.02 s'], [1307, '256 ms'], [1351, '64 ms'], [1393.5, '16 ms'], [1437, '4 ms'], [1481, '1 ms'], [1525.5, '0.250 ms']],
        vx: [[279, '17:00'], [473, '17:05'], [666.5, '17:10'], [860, '17:15'], [1054, '17:20'], [1248, '17:25']] });
      function mx(z) { return 140 + z / 1.153; }
      function my(z) { return 1110 + z / 2.9; }
      var a = 311, e = 1430, st = 1.6;
      var max = sample([[311, 880], [325, 810], [600, 800], [802, 750], [803, 530], [1000, 500], [1230, 470], [1245, 620], [1290, 700], [1420, 800], [1430, 920]],
        [[803, 45, 30, .12, 90], [1240, 50, 40, .2, 50], [1300, 60, 50, .15, 60], [1430, 40, 40, .15, 50]], a, e, st);
      var p95 = sample([[311, 900], [330, 850], [600, 845], [790, 815], [802, 835], [803, 600], [900, 540], [1230, 500], [1245, 700], [1300, 800], [1340, 850], [1420, 870], [1430, 925]],
        [[803, 35, 28, .12, 50], [1240, 45, 45, .1, 25], [1300, 45, 50, .1, 30], [1430, 30, 30, .1, 20]], a, e, st);
      var p90 = sample([[311, 880], [330, 862], [600, 855], [790, 825], [802, 845], [803, 620], [900, 560], [1000, 550], [1060, 525], [1230, 505], [1245, 660], [1300, 800], [1340, 860], [1420, 885], [1430, 925]],
        [[803, 22, 45, 0, 0], [1000, 35, 150, .2, 15], [1240, 30, 105, .1, 15], [1300, 50, 85, .1, 10], [1430, 20, 40, 0, 0]], a, e, st);
      var min = sample([[311, 1030], [325, 1068], [795, 1075], [803, 1045], [1240, 1045], [1242, 1065], [1420, 1068], [1430, 1030]],
        [[800, 5, 5, .002, 0], [1010, 130, 25, .25, 150], [1240, 210, 30, .45, 180], [1430, 5, 5, 0, 0]], a, e, st,
        function (x, y) { if (Math.abs(x - 790) < 1) return 1150; if (Math.abs(x - 1296) < 1) return 1130; if (Math.abs(x - 1116) < 1) return 1135; return y; });
      return g + drawSeries([{ data: max, c: C.g }, { data: p95, c: C.y }, { data: p90, c: C.b }, { data: min, c: C.o }], mx, my, 1525);
    },
    heat: function () {
      var labels = ['2.05 s', '1.02 s', '512.00 ms', '256.00 ms', '128.00 ms', '64.00 ms', '32.00 ms', '16.00 ms', '8.00 ms', '4.00 ms', '2.00 ms', '1.00 ms', '0.50 ms', '0'];
      var hy = labels.map(function (l, i) { return [1223 + 25.65 * i, l]; });
      var g = grid({ left: 1638, right: 2802, top: 1223, bottom: 1557, ty: 1591, yc: 'ax-hy', xc: 'ax-hx', hy: hy,
        vx: [[1641, '17:00'], [1835, '17:05'], [2030, '17:10'], [2223.6, '17:15'], [2418, '17:20'], [2612.7, '17:25']] });
      var pal = { '0': '#006837', '1': '#0a7b41', '2': '#1a9850', '3': '#3aa85d', '4': '#4fb461', '5': '#6bc064', '6': '#87cd67', '7': '#a6d96a', '8': '#bde477', '9': '#d9ef8b', A: '#edf7a3', B: '#fbfdb8', C: '#fee99d', D: '#fed883', E: '#fdc070', F: '#fca55d', G: '#f6794a', H: '#e95538', I: '#d73027', J: '#b91326', K: '#a50026' };
      var rows = [
        '.............0..000000....',
        '...........01011234440....',
        '...........15657EHJIG30...',
        '...........6ABADHKHIH40...',
        '.0.0...00..8FEFEBA9AA600..',
        '.00000000009CDCA633359200.',
        '00111112223877763111 1B6100'.replace(' ', ''),
        '02333458889822221 0000BB620'.replace(' ', ''),
        '147788ADDDD71010 00000 9DA61'.replace(/ /g, ''),
        '146667 9BBBB50000 00000 5A950'.replace(/ /g, ''),
        '135555 788882 0000 00000 27740'.replace(/ /g, ''),
        '.00000000000......00..00..',
        '...........0..............'
      ];
      var s = g;
      rows.forEach(function (row, r) {
        for (var c = 0; c < row.length; c++) {
          var k = row.charAt(c);
          if (k === '.') continue;
          s += '<rect x="' + (1758.8 + 38.82 * c).toFixed(1) + '" y="' + (1226 + 25.65 * r).toFixed(1) + '" width="35" height="20.4" fill="' + pal[k] + '"/>';
        }
      });
      return s;
    },
    blocked: function () {
      var g = grid({ left: 318, right: 1440, top: 2057, bottom: 2361.4, ty: 2398,
        hy: [[2057, '9.84 s'], [2089, '1.64 s'], [2123, '273 ms'], [2157, '45.6 ms'], [2191, '7.59 ms'], [2225, '1.27 ms'], [2259, '0.211 ms'], [2293.5, '0.0352 ms'], [2327.6, '0.00586 ms'], [2361.4, '0.000977 ms']],
        vx: [[319.5, '17:00'], [507, '17:05'], [695, '17:10'], [880.7, '17:15'], [1069, '17:20'], [1257, '17:25']] });
      function mx(z) { return 140 + z / 1.153; }
      function my(z) { return 1950 + z / 2.9; }
      var a = 353, e = 1432, st = 1.7;
      var max = sample([[353, 800], [360, 800], [800, 790], [812, 620], [830, 520], [900, 505], [1050, 475], [1250, 460], [1310, 700], [1320, 780], [1400, 860], [1430, 1010]],
        [[810, 70, 130, .12, 110], [1250, 40, 40, .12, 25], [1320, 50, 50, .1, 50], [1430, 60, 140, .12, 100]], a, e, st);
      var p95 = sample([[353, 820], [358, 900], [375, 1050], [400, 1092], [805, 1092], [810, 700], [830, 550], [900, 515], [1100, 480], [1250, 475], [1310, 700], [1312, 1092], [1430, 1095]],
        [[808, 65, 2, .2, 35], [1250, 30, 25, .1, 15], [1310, 40, 40, .1, 20], [1430, 65, 2, .2, 35]], a, e, st);
      var p90 = sample([[353, 610], [358, 1040], [380, 1080], [400, 1097], [805, 1097], [812, 750], [830, 585], [900, 530], [1000, 520], [1060, 485], [1250, 470], [1310, 740], [1312, 1095], [1430, 1098]],
        [[808, 4, 4, 0, 0], [1000, 30, 110, .1, 10], [1250, 25, 85, .1, 10], [1310, 40, 70, .1, 10], [1430, 4, 4, 0, 0]], a, e, st);
      var hiState = true;
      var min = sample([[353, 1105], [370, 1155], [810, 1165], [1300, 1165], [1305, 1165], [1410, 1160], [1432, 1100]],
        [[1430, 6, 6, 0, 0]], a, e, 2.4,
        function (x, y) {
          if (x < 815 || x > 1303) return y;
          if (x > 1250 && x < 1298) return 835;
          if (R() < .7) hiState = !hiState;
          if (!hiState) return 1105 + R() * 45;
          if (x > 1040 && x < 1250 && R() < .3) return 600 + R() * 220;
          return 830 + R() * 8;
        });
      return g + drawSeries([{ data: max, c: C.g }, { data: p95, c: C.y }, { data: p90, c: C.b }, { data: min, c: C.o }], mx, my, 2361);
    }
  };

  Array.prototype.forEach.call(document.querySelectorAll('svg[data-chart]'), function (svg) {
    var r = svg.getBoundingClientRect();
    svg.setAttribute('viewBox', r.left + ' ' + r.top + ' ' + r.width + ' ' + r.height);
    svg.innerHTML = draw[svg.getAttribute('data-chart')]();
  });
})();
```
